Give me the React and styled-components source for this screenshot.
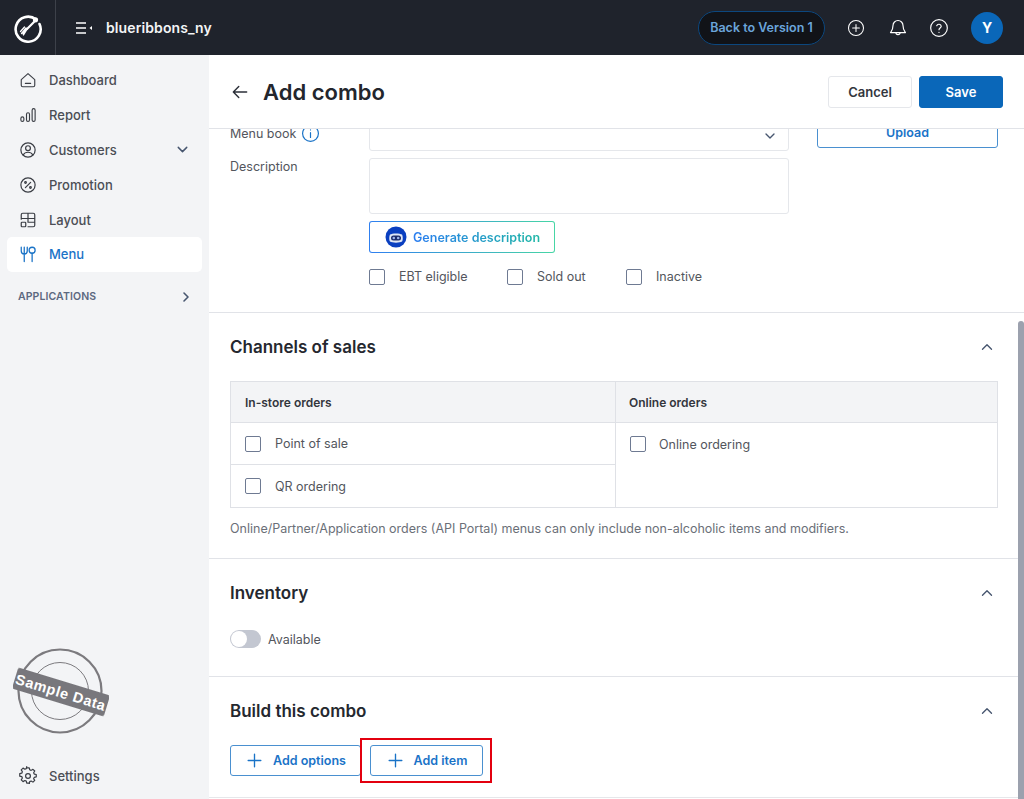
import React from 'react';
import styled, { createGlobalStyle } from 'styled-components';

const Global = createGlobalStyle`
  html, body { margin: 0; padding: 0; height: 100%; overflow: hidden; }
  body { font-family: Inter, "Liberation Sans", sans-serif; color: #2b2f38; background: #fff; }
  * { box-sizing: border-box; }
`;

const Page = styled.div`display: flex; flex-direction: column; width: 1024px; height: 799px; overflow: hidden;`;
const TopBar = styled.header`display: flex; align-items: center; height: 55px; flex: none; background: #1f232c; color: #fff;`;
const LogoCell = styled.div`width: 56px; height: 55px; flex: none; display: flex; align-items: center; justify-content: center; border-right: 1px solid #3d414a;`;
const MenuToggle = styled.div`display: flex; margin-left: 19px; width: 18px;`;
const Workspace = styled.div`margin-left: 13px; font-size: 14px; font-weight: 600; color: #f3f4f6; letter-spacing: 0.1px;`;
const TopRight = styled.div`margin-left: auto; display: flex; align-items: center; padding-right: 21px;`;
const VersionPill = styled.div`
  width: 127px; height: 34px; border-radius: 17px; background: #111318; border: 1px solid #0c477e;
  display: flex; align-items: center; justify-content: center; font-size: 12.5px; font-weight: 600; color: #6ba5da;
`;
const TopIcon = styled.div`display: flex; width: 20px; justify-content: center; margin-left: ${p => p.$gap}px;`;
const Avatar = styled.div`
  width: 32px; height: 32px; border-radius: 50%; background: #0a67b9; margin-left: 22px; color: #fff;
  display: flex; align-items: center; justify-content: center; font-size: 14px; font-weight: 700;
`;

const Body = styled.div`display: flex; flex: 1; min-height: 0;`;
const Sidebar = styled.aside`width: 209px; flex: none; background: #f3f4f6; display: flex; flex-direction: column; padding: 8px 7px 6px;`;
const NavItem = styled.div`
  display: flex; align-items: center; height: 34.8px; padding: 0 12px; border-radius: 5px;
  font-size: 13px; font-weight: 500; color: ${p => (p.$active ? '#1a73c7' : '#4b4e55')};
  background: ${p => (p.$active ? '#fff' : 'transparent')};
`;
const NavIcon = styled.span`display: flex; width: 18px; height: 20px; margin-right: 12px; align-items: center; justify-content: center; color: ${p => (p.$active ? '#1a73c7' : '#3a3d44')};`;
const NavChevron = styled.span`display: flex; margin-left: auto; margin-right: -1px; color: #47566f;`;
const GroupLabel = styled.div`
  display: flex; align-items: center; height: 34px; margin-top: 8px; padding: 0 9px 0 11px;
  font-size: 10.5px; font-weight: 600; color: #5c6880; letter-spacing: 0.1px;
`;
const Stamp = styled.div`margin: auto 0 20px 6px; display: flex; transform: translateY(0);`;

const Main = styled.main`flex: 1; min-width: 0; display: flex; flex-direction: column; background: #fff;`;
const PageHead = styled.div`display: flex; align-items: center; height: 74px; flex: none; padding: 0 21px 0 21px; border-bottom: 1px solid #e1e3e8;`;
const BackArrow = styled.span`display: flex; margin-right: 13px; color: #2b2f38;`;
const Title = styled.h1`margin: 0; font-size: 22px; font-weight: 600; color: #23262d;`;
const HeadActions = styled.div`margin-left: auto; display: flex; gap: 7px;`;
const HeadButton = styled.button`
  width: ${p => p.$w}px; height: 32px; border-radius: 3px; font: 600 13px Inter, sans-serif;
  border: 1px solid ${p => (p.$primary ? '#0a67b9' : '#e5e7eb')};
  background: ${p => (p.$primary ? '#0a67b9' : '#fff')}; color: ${p => (p.$primary ? '#fff' : '#33363d')};
`;
const ScrollArea = styled.div`position: relative; flex: 1; min-height: 0; overflow: hidden;`;
const ScrollThumb = styled.div`position: absolute; right: 0; top: 192px; bottom: 0; width: 6px; border-radius: 3px 3px 0 0; background: #9ca1ae;`;
const Content = styled.div`margin-top: -19px;`;

const Section = styled.section`border-bottom: 1px solid ${p => (p.$soft ? '#e6e7ea' : '#e1e3e8')}; padding: ${p => p.$pad};`;
const FormGrid = styled.div`display: grid; grid-template-columns: 139px 420px 181px; column-gap: 0; align-items: start;`;
const FieldLabel = styled.label`display: flex; align-items: center; gap: 5px; font-size: 12.5px; color: #53565d; min-height: ${p => p.$h}px;`;
const SelectBox = styled.div`height: 41px; display: flex; align-items: center; justify-content: flex-end; padding: 10px 10px 0 0; border: 1px solid #e5e7eb; border-radius: 3px; color: #47566f;`;
const UploadCol = styled.div`grid-column: 3; grid-row: 1; margin-left: 28px; width: 181px;`;
const UploadButton = styled.div`height: 38px; width: 181px; border: 1px solid #4a90d0; border-radius: 3px; display: flex; align-items: flex-end; justify-content: center; padding-bottom: 7px; font-size: 12.5px; font-weight: 600; color: #1a73c7;`;
const TextArea = styled.div`height: 56px; margin-top: 7px; border: 1px solid #e5e7eb; border-radius: 3px;`;
const DescLabel = styled(FieldLabel)`margin-top: 7px; padding-top: 1px; align-items: flex-start;`;
const GenWrap = styled.div`grid-column: 2; margin-top: 7px; width: 186px; height: 32px; padding: 1px; border-radius: 3px; background: linear-gradient(90deg, #2f7ff0, #47d6a5);`;
const GenButton = styled.div`
  height: 100%; background: #fff; border-radius: 2px; display: flex; align-items: center; gap: 6px; padding-left: 15px;
  font-size: 12.5px; font-weight: 600;
`;
const GradText = styled.span`background: linear-gradient(90deg, #2b7df0, #1fb7a6); -webkit-background-clip: text; background-clip: text; color: transparent;`;
const CheckRow = styled.div`grid-column: 2; display: flex; margin-top: 15px; height: 17px; align-items: center;`;
const CheckItem = styled.label`display: flex; align-items: center; font-size: 12.5px; color: #53565d; width: ${p => p.$w}px;`;
const Box = styled.span`display: block; width: 16px; height: 16px; flex: none; border: 1px solid #6e7a92; border-radius: 2px; margin-right: ${p => p.$gap || 14}px; background: #fff;`;

const SectionHead = styled.div`display: flex; align-items: center; justify-content: space-between; height: 24px; padding-right: 0;`;
const SectionTitle = styled.h2`margin: 0; font-size: 17px; font-weight: 600; color: #25282f;`;
const Chevron = styled.span`display: flex; color: #47566f; margin-right: 2px;`;
const SalesTable = styled.div`display: grid; grid-template-columns: 384px 1fr; margin-top: 22px; border: 1px solid #dfe1e6;`;
const Th = styled.div`height: 41px; background: #f3f4f6; border-bottom: 1px solid #dfe1e6; display: flex; align-items: center; padding-left: ${p => p.$pl}px; font-size: 12px; font-weight: 600; color: #33363d; border-left: ${p => (p.$div ? '1px solid #dfe1e6' : '0')};`;
const Cell = styled.div`border-left: ${p => (p.$div ? '1px solid #dfe1e6' : '0')};`;
const CellRow = styled.div`height: ${p => p.$h}px; display: flex; align-items: center; padding-left: ${p => p.$pl}px; font-size: 12.5px; color: #53565d; border-bottom: ${p => (p.$line ? '1px solid #dfe1e6' : '0')};`;
const Note = styled.p`margin: 13px 0 0; font-size: 12.5px; line-height: 16px; color: #6b6f78;`;
const ToggleRow = styled.div`display: flex; align-items: center; gap: 7px; margin-top: 25px; font-size: 12.5px; color: #53565d;`;
const Toggle = styled.span`position: relative; display: block; width: 31px; height: 18px; border-radius: 9px; background: #c3c7d1;`;
const Knob = styled.span`position: absolute; left: 1px; top: 1px; width: 16px; height: 16px; border-radius: 50%; background: #fff;`;
const BtnRow = styled.div`display: flex; gap: 9px; margin-top: 22px;`;
const OutlineBtn = styled.div`
  position: relative; width: ${p => p.$w}px; height: 31px; border: 1px solid #4a90d0; border-radius: 3px; display: flex; align-items: center; justify-content: center; gap: 9px;
  font-size: 12.5px; font-weight: 600; color: #1a73c7;
`;
const Highlight = styled.span`position: absolute; left: -11px; top: -8px; right: -10px; bottom: -8px; border: 2px solid #e3000f; pointer-events: none;`;

const Stroke = ({ size = 20, w = 1.6, vb = 24, children }) => (
  <svg width={size} height={size} viewBox={`0 0 ${vb} ${vb}`} fill="none" stroke="currentColor" strokeWidth={w} strokeLinecap="round" strokeLinejoin="round">{children}</svg>
);
const ChevDown = ({ size = 16 }) => <Stroke size={size} w={2}><path d="M6 9l6 6 6-6" /></Stroke>;
const ChevUp = () => <Stroke size={18} w={1.8}><path d="M6 15l6-6 6 6" /></Stroke>;
const ChevRight = () => <Stroke size={16} w={2.4}><path d="M9 6l6 6-6 6" /></Stroke>;
const Plus = () => <Stroke size={19} w={1.7}><path d="M12 4v16M4 12h16" /></Stroke>;

const Logo = () => (
  <svg width="30" height="30" viewBox="0 0 30 30" fill="none" stroke="#fff" strokeLinecap="round">
    <path d="M23 6.5A12.5 12.5 0 1 0 26.5 11" strokeWidth="2.6" />
    <circle cx="22.5" cy="6.8" r="2.6" fill="#fff" stroke="none" />
    <path d="M21 9L14 16" strokeWidth="2.2" />
    <path d="M14.5 15.5L10.5 22M11.5 14L7.5 18.5M13 15L8.5 20.5M14 15.5L10 21" strokeWidth="1.3" />
  </svg>
);

const Sample = () => (
  <svg width="96" height="90" viewBox="0 0 96 90">
    <defs>
      <filter id="rough"><feTurbulence type="fractalNoise" baseFrequency="0.9" numOctaves="1" seed="3" /><feDisplacementMap in="SourceGraphic" scale="1.6" /></filter>
    </defs>
    <g fill="none" stroke="#7b7a7e" filter="url(#rough)">
      <circle cx="47" cy="43" r="41.5" strokeWidth="2.2" />
      <circle cx="47" cy="43" r="28.5" strokeWidth="1" />
    </g>
    <g transform="rotate(17 48 44)">
      <rect x="0" y="33" width="96" height="22" rx="2" fill="#78777b" filter="url(#rough)" />
      <text x="48" y="49.5" textAnchor="middle" fill="#fff" fontFamily="Liberation Sans, sans-serif" fontSize="14.5" fontWeight="700" letterSpacing="0.6">Sample Data</text>
    </g>
  </svg>
);

const nav = [
  ['Dashboard', <Stroke size={20} w={1.5}><path d="M3 11.5L12 3.5l9 8V19a2 2 0 0 1-2 2H5a2 2 0 0 1-2-2z" /><path d="M8.5 16.5h7" /></Stroke>],
  ['Report', <Stroke size={20} w={1.5}><rect x="2.5" y="14.5" width="4" height="6" rx="2" /><rect x="10" y="9" width="4" height="11.5" rx="2" /><rect x="17.5" y="3.5" width="4" height="17" rx="2" /></Stroke>],
  ['Customers', <Stroke size={20} w={1.6}><circle cx="12" cy="12" r="9.5" /><circle cx="12" cy="9.5" r="3.2" /><path d="M5.5 18.5c1.5-2.5 3.8-3.5 6.5-3.5s5 1 6.5 3.5" /></Stroke>, true],
  ['Promotion', <Stroke size={20} w={1.6}><circle cx="12" cy="12" r="9.5" /><path d="M15.5 8.5l-7 7" /><circle cx="8.7" cy="8.7" r="1.1" /><circle cx="15.3" cy="15.3" r="1.1" /></Stroke>],
  ['Layout', <Stroke size={20} w={1.6}><path d="M3 11V5a2 2 0 0 1 2-2h14a2 2 0 0 1 2 2v14a2 2 0 0 1-2 2h-7M3 10h18M12 3v12h9" /><rect x="3" y="15" width="6" height="6" rx="1" /></Stroke>],
];

export default function App() {
  return (
    <Page>
      <Global />
      <TopBar>
        <LogoCell><Logo /></LogoCell>
        <MenuToggle>
          <svg width="18" height="14" viewBox="0 0 18 14" fill="none" stroke="#fff" strokeWidth="1.6"><path d="M1 2h10M1 7h10M1 12h10" /><path d="M17 5v4l-2.5-2z" fill="#fff" stroke="none" /></svg>
        </MenuToggle>
        <Workspace>blueribbons_ny</Workspace>
        <TopRight>
          <VersionPill>Back to Version 1</VersionPill>
          <TopIcon $gap={21}><Stroke size={18} w={1.4}><circle cx="12" cy="12" r="10" /><path d="M12 7.5v9M7.5 12h9" /></Stroke></TopIcon>
          <TopIcon $gap={22}><Stroke size={20} w={1.4}><path d="M12 3a6 6 0 0 0-6 6c0 5-2 7-3 8.5h18c-1-1.500-3-3.500-3-8.500a6 6 0 0 0-6-6z" /><path d="M9.500 17.500a2.500 2.500 0 0 0 5 0" /></Stroke></TopIcon>
          <TopIcon $gap={21}><Stroke size={20} w={1.4}><circle cx="12" cy="12" r="10" /><path d="M9.300 9.300a2.800 2.800 0 0 1 5.400.7c0 1.800-2.700 2.300-2.700 4" /><path d="M12 17.200v.1" /></Stroke></TopIcon>
          <Avatar>Y</Avatar>
        </TopRight>
      </TopBar>
      <Body>
        <Sidebar>
          {nav.map(([label, icon, chev]) => (
            <NavItem key={label}>
              <NavIcon>{icon}</NavIcon>{label}
              {chev && <NavChevron><ChevDown size={17} /></NavChevron>}
            </NavItem>
          ))}
          <NavItem $active>
            <NavIcon $active><Stroke size={20} w={1.7}><path d="M3 3v5a4 4 0 0 0 8 0V3M7 3v19" /><circle cx="17.500" cy="7" r="4" /><path d="M17.500 11v11" /></Stroke></NavIcon>
            Menu
          </NavItem>
          <GroupLabel>APPLICATIONS<NavChevron><ChevRight /></NavChevron></GroupLabel>
          <Stamp><Sample /></Stamp>
          <NavItem>
            <NavIcon><Stroke size={20} w={1.6}><circle cx="12" cy="12" r="3.200" /><path d="M10.300 2.800h3.400l.6 2.700 1.900.8 2.400-1.500 2.400 2.400-1.500 2.400.8 1.900 2.700.6v3.400l-2.700.6-.8 1.900 1.500 2.400-2.400 2.400-2.400-1.500-1.900.8-.6 2.700" transform="translate(0 -1.500) scale(1 .95)" /><path d="M13.700 21.500h-3.400l-.6-2.700-1.900-.8-2.400 1.500-2.400-2.400 1.500-2.400-.8-1.900-2.700-.6v-3.400l2.700-.6.800-1.900-1.500-2.400 2.400-2.400 2.400 1.500 1.900-.8.600-2.700" /></Stroke></NavIcon>
            Settings
          </NavItem>
        </Sidebar>
        <Main>
          <PageHead>
            <BackArrow><Stroke size={20} w={1.7}><path d="M20 12H4M10.500 5.500L4 12l6.500 6.500" /></Stroke></BackArrow>
            <Title>Add combo</Title>
            <HeadActions>
              <HeadButton $w={84}>Cancel</HeadButton>
              <HeadButton $w={84} $primary>Save</HeadButton>
            </HeadActions>
          </PageHead>
          <ScrollArea>
            <Content>
              <Section $pad="0 26px 27px 21px">
                <FormGrid>
                  <FieldLabel $h={41} style={undefined}>
                    <LabelOffset>Menu book</LabelOffset>
                    <Info><Stroke size={19} w={1.5}><circle cx="12" cy="12" r="10" /><path d="M12 11v6M12 7.500v.1" /></Stroke></Info>
                  </FieldLabel>
                  <SelectBox><ChevDown /></SelectBox>
                  <UploadCol><UploadButton>Upload</UploadButton></UploadCol>
                  <DescLabel>Description</DescLabel>
                  <TextArea />
                  <GenWrap>
                    <GenButton>
                      <svg width="22" height="22" viewBox="0 0 22 22"><circle cx="11" cy="11" r="10.500" fill="#0a3fc0" /><path d="M5 8.500c2-1.500 10-1.500 12 0 1 2 1 6 0 7-2 1.500-10 1.500-12 0-1-1-1-5 0-7z" fill="#dfe6f5" /><rect x="6" y="9.500" width="10" height="5" rx="2.500" fill="#1b2a6b" /><circle cx="8.800" cy="12" r="1.300" fill="#9fb4e8" /><circle cx="13.200" cy="12" r="1.300" fill="#9fb4e8" /></svg>
                      <GradText>Generate description</GradText>
                    </GenButton>
                  </GenWrap>
                  <CheckRow>
                    <CheckItem $w={138}><Box />EBT eligible</CheckItem>
                    <CheckItem $w={119}><Box />Sold out</CheckItem>
                    <CheckItem $w={100}><Box />Inactive</CheckItem>
                  </CheckRow>
                </FormGrid>
              </Section>
              <Section $pad="22px 26px 21px 21px">
                <SectionHead><SectionTitle>Channels of sales</SectionTitle><Chevron><ChevUp /></Chevron></SectionHead>
                <SalesTable>
                  <Th $pl={14}>In-store orders</Th>
                  <Th $pl={13} $div>Online orders</Th>
                  <Cell>
                    <CellRow $h={42} $pl={14} $line><Box $gap={14} />Point of sale</CellRow>
                    <CellRow $h={42} $pl={14}><Box $gap={14} />QR ordering</CellRow>
                  </Cell>
                  <Cell $div>
                    <CellRow $h={42} $pl={14}><Box $gap={13} />Online ordering</CellRow>
                  </Cell>
                </SalesTable>
                <Note>Online/Partner/Application orders (API Portal) menus can only include non-alcoholic items and modifiers.</Note>
              </Section>
              <Section $pad="22px 26px 28px 21px">
                <SectionHead><SectionTitle>Inventory</SectionTitle><Chevron><ChevUp /></Chevron></SectionHead>
                <ToggleRow><Toggle><Knob /></Toggle>Available</ToggleRow>
              </Section>
              <Section $pad="22px 26px 21px 21px" $soft>
                <SectionHead><SectionTitle>Build this combo</SectionTitle><Chevron><ChevUp /></Chevron></SectionHead>
                <BtnRow>
                  <OutlineBtn $w={131}><Plus />Add options</OutlineBtn>
                  <OutlineBtn $w={113}><Plus />Add item<Highlight /></OutlineBtn>
                </BtnRow>
              </Section>
            </Content>
            <ScrollThumb />
          </ScrollArea>
        </Main>
      </Body>
    </Page>
  );
}

const LabelOffset = styled.span`transform: translateY(3px);`;
const Info = styled.span`display: flex; color: #1a73c7; transform: translateY(3px);`;
